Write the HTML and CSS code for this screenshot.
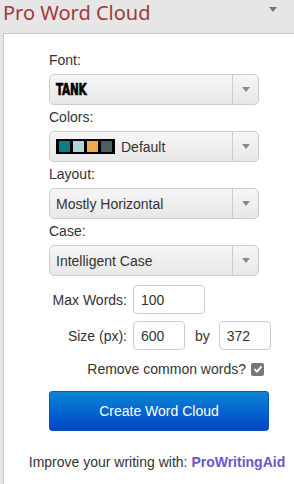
FILE: index.html
```html
<!DOCTYPE html>
<html lang="en">
<head>
    <meta charset="UTF-8">
    <meta name="viewport" content="width=device-width, initial-scale=1.0">
    <title>Pro Word Cloud</title>
    <link rel="stylesheet" href="styles.css">
</head>
<body>
    <!-- Intestazione del pannello -->
    <div class="header">
        <h1 class="title">Pro Word Cloud</h1>
        <span class="header-caret"></span>
    </div>

    <div class="panel">
        <div class="form">
            <label class="field-label">Font:</label>
            <div class="dropdown">
                <div class="dropdown-value"><span class="font-tank">TANK</span></div>
                <div class="dropdown-arrow"><span class="caret"></span></div>
            </div>

            <label class="field-label">Colors:</label>
            <div class="dropdown">
                <div class="dropdown-value">
                    <span class="swatches">
                        <span class="swatch teal"></span>
                        <span class="swatch pale"></span>
                        <span class="swatch orange"></span>
                        <span class="swatch slate"></span>
                    </span>
                    Default
                </div>
                <div class="dropdown-arrow"><span class="caret"></span></div>
            </div>

            <label class="field-label">Layout:</label>
            <div class="dropdown">
                <div class="dropdown-value">Mostly Horizontal</div>
                <div class="dropdown-arrow"><span class="caret"></span></div>
            </div>

            <label class="field-label">Case:</label>
            <div class="dropdown">
                <div class="dropdown-value">Intelligent Case</div>
                <div class="dropdown-arrow"><span class="caret"></span></div>
            </div>

            <div class="number-rows">
                <label class="row-label" for="max-words">Max Words:</label>
                <div class="row-inputs">
                    <input type="text" id="max-words" class="text-input wide" value="100">
                </div>
                <label class="row-label" for="size-w">Size (px):</label>
                <div class="row-inputs">
                    <input type="text" id="size-w" class="text-input" value="600">
                    <span class="by">by</span>
                    <input type="text" id="size-h" class="text-input" value="372">
                </div>
            </div>

            <div class="check-row">
                <span>Remove common words?</span>
                <span class="checkbox">
                    <svg width="10" height="10" viewBox="0 0 10 10"><path d="M1.5 5.2 L4 7.6 L8.6 2.4" fill="none" stroke="#fff" stroke-width="1.8"/></svg>
                </span>
            </div>

            <button class="create-btn">Create Word Cloud</button>
        </div>

        <p class="footer">Improve your writing with: <a href="#" class="brand">ProWritingAid</a></p>
    </div>
</body>
</html>
```

FILE: styles.css
```css
body {
    margin: 0;
    font-family: "Liberation Sans", Arial, sans-serif;
    font-size: 14px;
    color: #333;
    background-color: #e6e6e6;
    height: 484px;
    overflow: hidden;
}
.header {
    height: 33px;
    display: flex;
    align-items: flex-start;
    justify-content: space-between;
    padding: 0 17px 0 3px;
}
.title {
    margin: 0;
    font-family: "Noto Sans", sans-serif;
    font-weight: normal;
    font-size: 20px;
    line-height: 26px;
    color: #a4373a;
}
.header-caret {
    margin-top: 7px;
    border-left: 4px solid transparent;
    border-right: 4px solid transparent;
    border-top: 5px solid #777;
}
.panel {
    margin-left: 3px;
    height: 451px;
    background-color: #fff;
    border-top: 1px solid #c8c8c8;
    border-left: 1px solid #c8c8c8;
}
.form {
    width: 220px;
    padding: 14px 0 0 45px;
}
.field-label {
    display: block;
    line-height: 20px;
    margin: 2px 0 4px;
}
.dropdown {
    width: 208px;
    height: 29px;
    display: flex;
    border: 1px solid #ccc;
    border-radius: 5px;
    background: linear-gradient(#f6f6f6, #e8e8e8);
}
.dropdown-value {
    flex: 1;
    display: flex;
    align-items: center;
    padding-left: 6px;
}
.dropdown-arrow {
    width: 25px;
    border-left: 1px solid #ccc;
    display: flex;
    align-items: center;
    justify-content: center;
}
.caret {
    border-left: 4px solid transparent;
    border-right: 4px solid transparent;
    border-top: 5px solid #8a8a8a;
}
.font-tank {
    display: inline-block;
    font-family: "DejaVu Sans Condensed", "DejaVu Sans", sans-serif;
    font-weight: bold;
    font-size: 15px;
    color: #000;
    letter-spacing: -0.3px;
    -webkit-text-stroke: 0.6px #000;
    transform: scale(0.78, 1.05);
    transform-origin: left center;
}
.swatches {
    display: flex;
    gap: 3px;
    padding: 2px 3px;
    background-color: #000;
    margin-right: 6px;
}
.swatch {
    width: 11px;
    height: 11px;
}
.teal { background-color: #0e7c86; }
.pale { background-color: #aed4d6; }
.orange { background-color: #f5a64a; }
.slate { background-color: #525c5c; }
.number-rows {
    display: grid;
    grid-template-columns: 78px auto;
    column-gap: 6px;
    row-gap: 7px;
    align-items: center;
    margin-top: 9px;
}
.row-label {
    text-align: right;
}
.row-inputs {
    display: flex;
    align-items: center;
}
.text-input {
    width: 36px;
    height: 27px;
    padding: 0 7px;
    border: 1px solid #ccc;
    border-radius: 4px;
    font-family: inherit;
    font-size: 14px;
    color: #333;
}
.text-input.wide {
    width: 56px;
}
.by {
    margin: 0 9px 0 10px;
}
.check-row {
    display: flex;
    justify-content: flex-end;
    align-items: center;
    gap: 5px;
    padding-right: 5px;
    margin-top: 12px;
    height: 14px;
}
.checkbox {
    width: 13px;
    height: 13px;
    border-radius: 2px;
    background-color: #777;
    display: flex;
    align-items: center;
    justify-content: center;
}
.create-btn {
    display: block;
    width: 220px;
    height: 40px;
    margin-top: 15px;
    border: 1px solid #0a55b8;
    border-radius: 3px;
    background: linear-gradient(#0b86d6, #0045c6);
    color: #fff;
    font-family: inherit;
    font-size: 14px;
}
.footer {
    margin: 23px 0 0;
    padding-left: 16px;
    text-align: center;
}
.brand {
    color: #6b57c9;
    font-weight: bold;
    text-decoration: none;
}
```
